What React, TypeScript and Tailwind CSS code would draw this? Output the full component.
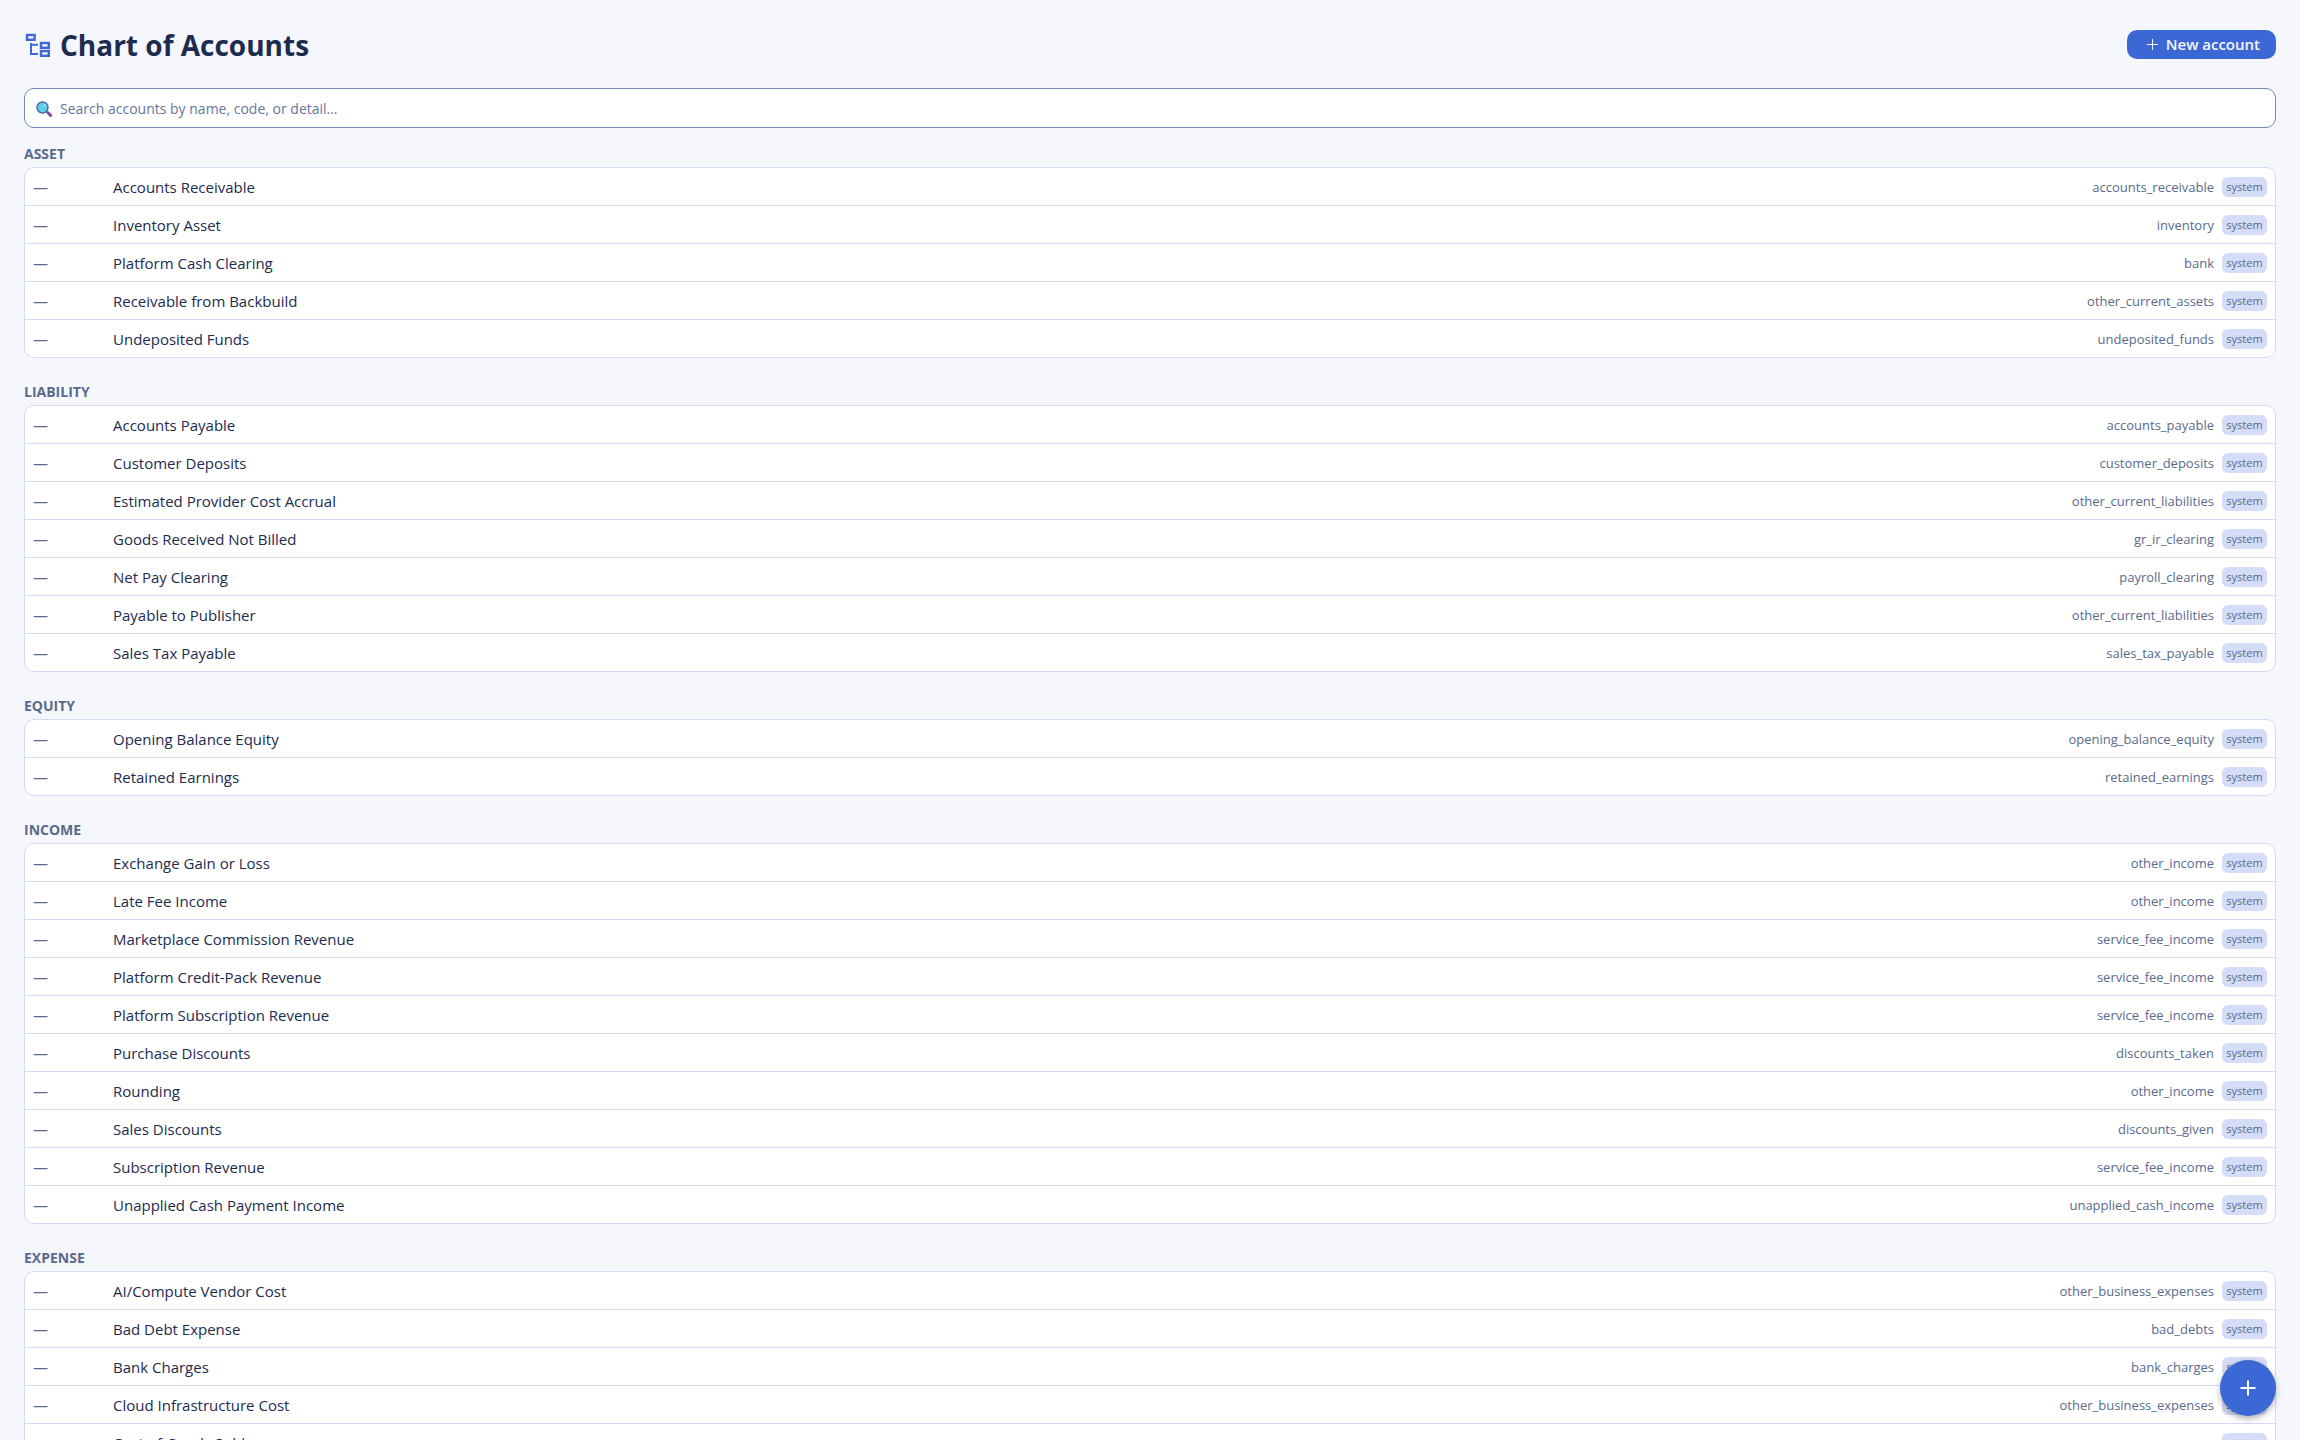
import React, { useState } from 'react';

type Account = { name: string; detail: string };
type Group = { title: string; accounts: Account[] };

const groups: Group[] = [
  {
    title: 'Asset',
    accounts: [
      { name: 'Accounts Receivable', detail: 'accounts_receivable' },
      { name: 'Inventory Asset', detail: 'inventory' },
      { name: 'Platform Cash Clearing', detail: 'bank' },
      { name: 'Receivable from Backbuild', detail: 'other_current_assets' },
      { name: 'Undeposited Funds', detail: 'undeposited_funds' },
    ],
  },
  {
    title: 'Liability',
    accounts: [
      { name: 'Accounts Payable', detail: 'accounts_payable' },
      { name: 'Customer Deposits', detail: 'customer_deposits' },
      { name: 'Estimated Provider Cost Accrual', detail: 'other_current_liabilities' },
      { name: 'Goods Received Not Billed', detail: 'gr_ir_clearing' },
      { name: 'Net Pay Clearing', detail: 'payroll_clearing' },
      { name: 'Payable to Publisher', detail: 'other_current_liabilities' },
      { name: 'Sales Tax Payable', detail: 'sales_tax_payable' },
    ],
  },
  {
    title: 'Equity',
    accounts: [
      { name: 'Opening Balance Equity', detail: 'opening_balance_equity' },
      { name: 'Retained Earnings', detail: 'retained_earnings' },
    ],
  },
  {
    title: 'Income',
    accounts: [
      { name: 'Exchange Gain or Loss', detail: 'other_income' },
      { name: 'Late Fee Income', detail: 'other_income' },
      { name: 'Marketplace Commission Revenue', detail: 'service_fee_income' },
      { name: 'Platform Credit-Pack Revenue', detail: 'service_fee_income' },
      { name: 'Platform Subscription Revenue', detail: 'service_fee_income' },
      { name: 'Purchase Discounts', detail: 'discounts_taken' },
      { name: 'Rounding', detail: 'other_income' },
      { name: 'Sales Discounts', detail: 'discounts_given' },
      { name: 'Subscription Revenue', detail: 'service_fee_income' },
      { name: 'Unapplied Cash Payment Income', detail: 'unapplied_cash_income' },
    ],
  },
  {
    title: 'Expense',
    accounts: [
      { name: 'AI/Compute Vendor Cost', detail: 'other_business_expenses' },
      { name: 'Bad Debt Expense', detail: 'bad_debts' },
      { name: 'Bank Charges', detail: 'bank_charges' },
      { name: 'Cloud Infrastructure Cost', detail: 'other_business_expenses' },
      { name: 'Cost of Goods Sold', detail: '' },
    ],
  },
];

const TreeIcon = () => (
  <svg width="28" height="28" viewBox="0 0 28 28" fill="none" stroke="#3b68d5" strokeWidth="2.4" aria-hidden="true">
    <rect x="3" y="3" width="7.6" height="4.8" />
    <rect x="17" y="11" width="7.8" height="4.8" />
    <rect x="17" y="19" width="7.8" height="4.8" />
    <path d="M7 11v11h7M7 12.8h7" strokeWidth="2" />
  </svg>
);

const MagnifierIcon = () => (
  <svg width="16" height="16" viewBox="0 0 16 16" className="shrink-0" aria-hidden="true">
    <path d="M10.5 10.5l1.5 1.5" stroke="#5b4a7d" strokeWidth="1.5" />
    <path d="M12 11.8l2.6 2.6" stroke="#83508f" strokeWidth="3" strokeLinecap="round" />
    <circle cx="6.5" cy="6.5" r="5.5" fill="#5fcdee" stroke="#466a9c" strokeWidth="1.4" />
    <circle cx="8.6" cy="4.2" r="1" fill="#b5ecfb" />
  </svg>
);

const AccountTable = ({ group }: { group: Group }) => (
  <section className="mb-6">
    <h2 className="mb-1 text-[14px] leading-[19px] font-bold uppercase text-[#5a6a8e]">{group.title}</h2>
    <div className="overflow-hidden rounded-[10px] border border-[#d3dcf4] bg-white">
      <table className="w-full border-separate border-spacing-0" aria-label={group.title}>
        <tbody>
          {group.accounts.map(account => (
            <tr key={account.name} className="h-[38px] last:h-[37px] *:border-b *:border-[#d3dcf4] last:*:border-b-0">
              <td className="min-w-[88px] p-0 pl-2 text-[15px] leading-5 text-[#5a6a8e]">—</td>
              <td className="w-full p-0 text-[15px] leading-5 text-[#1d2b4f]">{account.name}</td>
              <td className="p-0 pr-2 text-right text-[13px] leading-5 whitespace-nowrap text-[#5a6a8e]">{account.detail}</td>
              <td className="p-0 pr-2">
                <span className="block w-[45px] rounded-md bg-[#d5dcf5] text-center text-[11px] leading-5 text-[#5a6a8e]">
                  system
                </span>
              </td>
            </tr>
          ))}
        </tbody>
      </table>
    </div>
  </section>
);

const App = () => {
  const [query, setQuery] = useState('');

  const matches = (account: Account) =>
    `${account.name} ${account.detail}`.toLowerCase().includes(query.toLowerCase());

  const visible = groups
    .map(group => ({ ...group, accounts: group.accounts.filter(matches) }))
    .filter(group => group.accounts.length > 0);

  return (
    <div className="h-screen overflow-y-auto bg-[#f5f7fd] p-6 font-['Open_Sans','Noto_Sans',sans-serif] [scrollbar-width:none]">
      <header className="mb-[23px] flex items-center justify-between">
        <h1 className="flex items-center gap-2 pt-[2px] text-[28px] leading-[39px] font-bold text-[#1d2b4f]">
          <TreeIcon />
          Chart of Accounts
        </h1>
        <button
          type="button"
          className="flex items-center gap-1 rounded-[10px] bg-[#3b68d5] px-4 py-1 text-[15px] leading-[21px] font-semibold text-[#f5f7fd]"
        >
          <svg width="19" height="19" viewBox="0 0 19 19" stroke="currentColor" aria-hidden="true">
            <path d="M4 9.5h11M9.5 4v11" />
          </svg>
          New account
        </button>
      </header>

      <label className="mb-4 flex h-10 items-center gap-2 rounded-[10px] border border-[#7688b3] bg-white px-[11px] pt-px">
        <MagnifierIcon />
        <input
          type="text"
          aria-label="Search accounts"
          placeholder="Search accounts by name, code, or detail…"
          value={query}
          onChange={e => setQuery(e.target.value)}
          className="min-w-0 flex-1 bg-transparent text-[14px] leading-5 text-[#1d2b4f] outline-none placeholder:text-[#66769a]"
        />
      </label>

      <main>
        {visible.map(group => (
          <AccountTable key={group.title} group={group} />
        ))}
      </main>

      <button
        type="button"
        aria-label="New account"
        className="fixed right-6 bottom-6 flex size-14 items-center justify-center rounded-full bg-[#3b68d5] text-white shadow-[0_3px_6px_rgba(0,0,0,0.3)]"
      >
        <svg width="16" height="16" viewBox="0 0 16 16" stroke="currentColor" strokeWidth="2" aria-hidden="true">
          <path d="M0.5 8h15M8 0.5v15" />
        </svg>
      </button>
    </div>
  );
};

export default App;
